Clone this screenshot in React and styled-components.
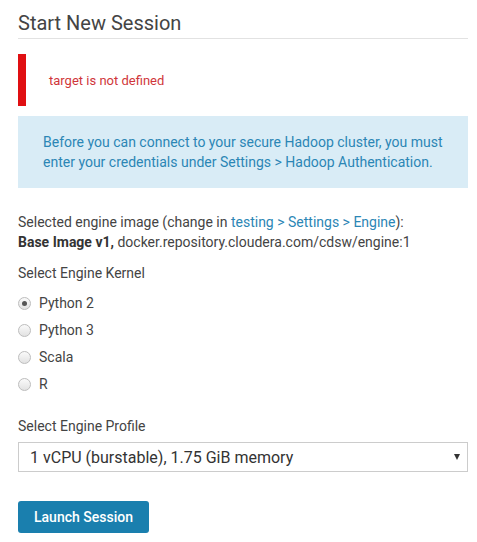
import React from "react";
import styled, { createGlobalStyle } from "styled-components";

const GlobalStyle = createGlobalStyle`
  body {
    margin: 0;
    padding: 0;
    background: #fff;
    font-family: Roboto, "Liberation Sans", sans-serif;
    color: #333;
  }
`;

const Page = styled.div`
  width: 450px;
  padding: 8px 9px 0 18px;
`;

const Title = styled.h2`
  margin: 0;
  font-size: 20px;
  font-weight: 400;
  line-height: 30px;
  color: #444;
  padding-bottom: 0;
  border-bottom: 1px solid #e2e2e2;
`;

const ErrorBox = styled.div`
  margin-top: 15px;
  height: 52px;
  border-left: 8px solid #e00f12;
  display: flex;
  align-items: center;
  padding-left: 23px;
  color: #d0363a;
  font-size: 13px;
`;

const InfoBox = styled.div`
  margin-top: 10px;
  background: #d9ecf6;
  color: #2b86b5;
  font-size: 14px;
  line-height: 20px;
  padding: 16px 25px 16px 25px;
`;

const Text = styled.div`
  font-size: 14px;
  line-height: 20px;
  color: #444;
  margin-top: ${({ $mt }) => $mt || 0}px;
`;

const Link = styled.span`
  color: #2b86b5;
`;

const Strong = styled.b`
  font-weight: 700;
  color: #333;
`;

const RadioList = styled.div`
  display: flex;
  flex-direction: column;
  gap: 7px;
  margin-top: 10px;
`;

const RadioRow = styled.label`
  display: flex;
  align-items: center;
  gap: 8px;
  height: 20px;
  font-size: 14px;
  color: #444;
`;

const RadioDot = styled.span`
  width: 11px;
  height: 11px;
  border-radius: 50%;
  border: 1px solid #bdbdbd;
  background: linear-gradient(#fafafa, #e2e2e2);
  display: flex;
  align-items: center;
  justify-content: center;
  &::after {
    content: "";
    display: ${({ $checked }) => ($checked ? "block" : "none")};
    width: 5px;
    height: 5px;
    border-radius: 50%;
    background: #555;
  }
`;

const SelectBox = styled.div`
  margin-top: 6px;
  height: 30px;
  box-sizing: border-box;
  border: 1px solid #ccc;
  display: flex;
  align-items: center;
  justify-content: space-between;
  padding: 0 7px 0 11px;
  font-size: 16px;
  color: #333;
`;

const Arrow = styled.span`
  width: 0;
  height: 0;
  border-left: 3.5px solid transparent;
  border-right: 3.5px solid transparent;
  border-top: 6px solid #333;
`;

const Button = styled.button`
  margin-top: 29px;
  width: 131px;
  height: 32px;
  border: none;
  border-radius: 3px;
  background: #1a7fae;
  color: #fff;
  font-family: Roboto, "Liberation Sans", sans-serif;
  font-size: 14px;
  font-weight: 500;
  padding: 0;
`;

const kernels = ["Python 2", "Python 3", "Scala", "R"];

export default function App() {
  return (
    <>
      <GlobalStyle />
      <Page>
        <Title>Start New Session</Title>
        <ErrorBox>target is not defined</ErrorBox>
        <InfoBox>
          Before you can connect to your secure Hadoop cluster, you must enter your credentials under Settings &gt; Hadoop Authentication.
        </InfoBox>
        <Text $mt={24}>
          Selected engine image (change in <Link>testing &gt; Settings &gt; Engine</Link>):
          <br />
          <Strong>Base Image v1,</Strong> docker.repository.cloudera.com/cdsw/engine:1
        </Text>
        <Text $mt={11}>Select Engine Kernel</Text>
        <RadioList>
          {kernels.map((k, i) => (
            <RadioRow key={k}>
              <RadioDot $checked={i === 0} />
              {k}
            </RadioRow>
          ))}
        </RadioList>
        <Text $mt={22}>Select Engine Profile</Text>
        <SelectBox>
          1 vCPU (burstable), 1.75 GiB memory
          <Arrow />
        </SelectBox>
        <Button>Launch Session</Button>
      </Page>
    </>
  );
}
